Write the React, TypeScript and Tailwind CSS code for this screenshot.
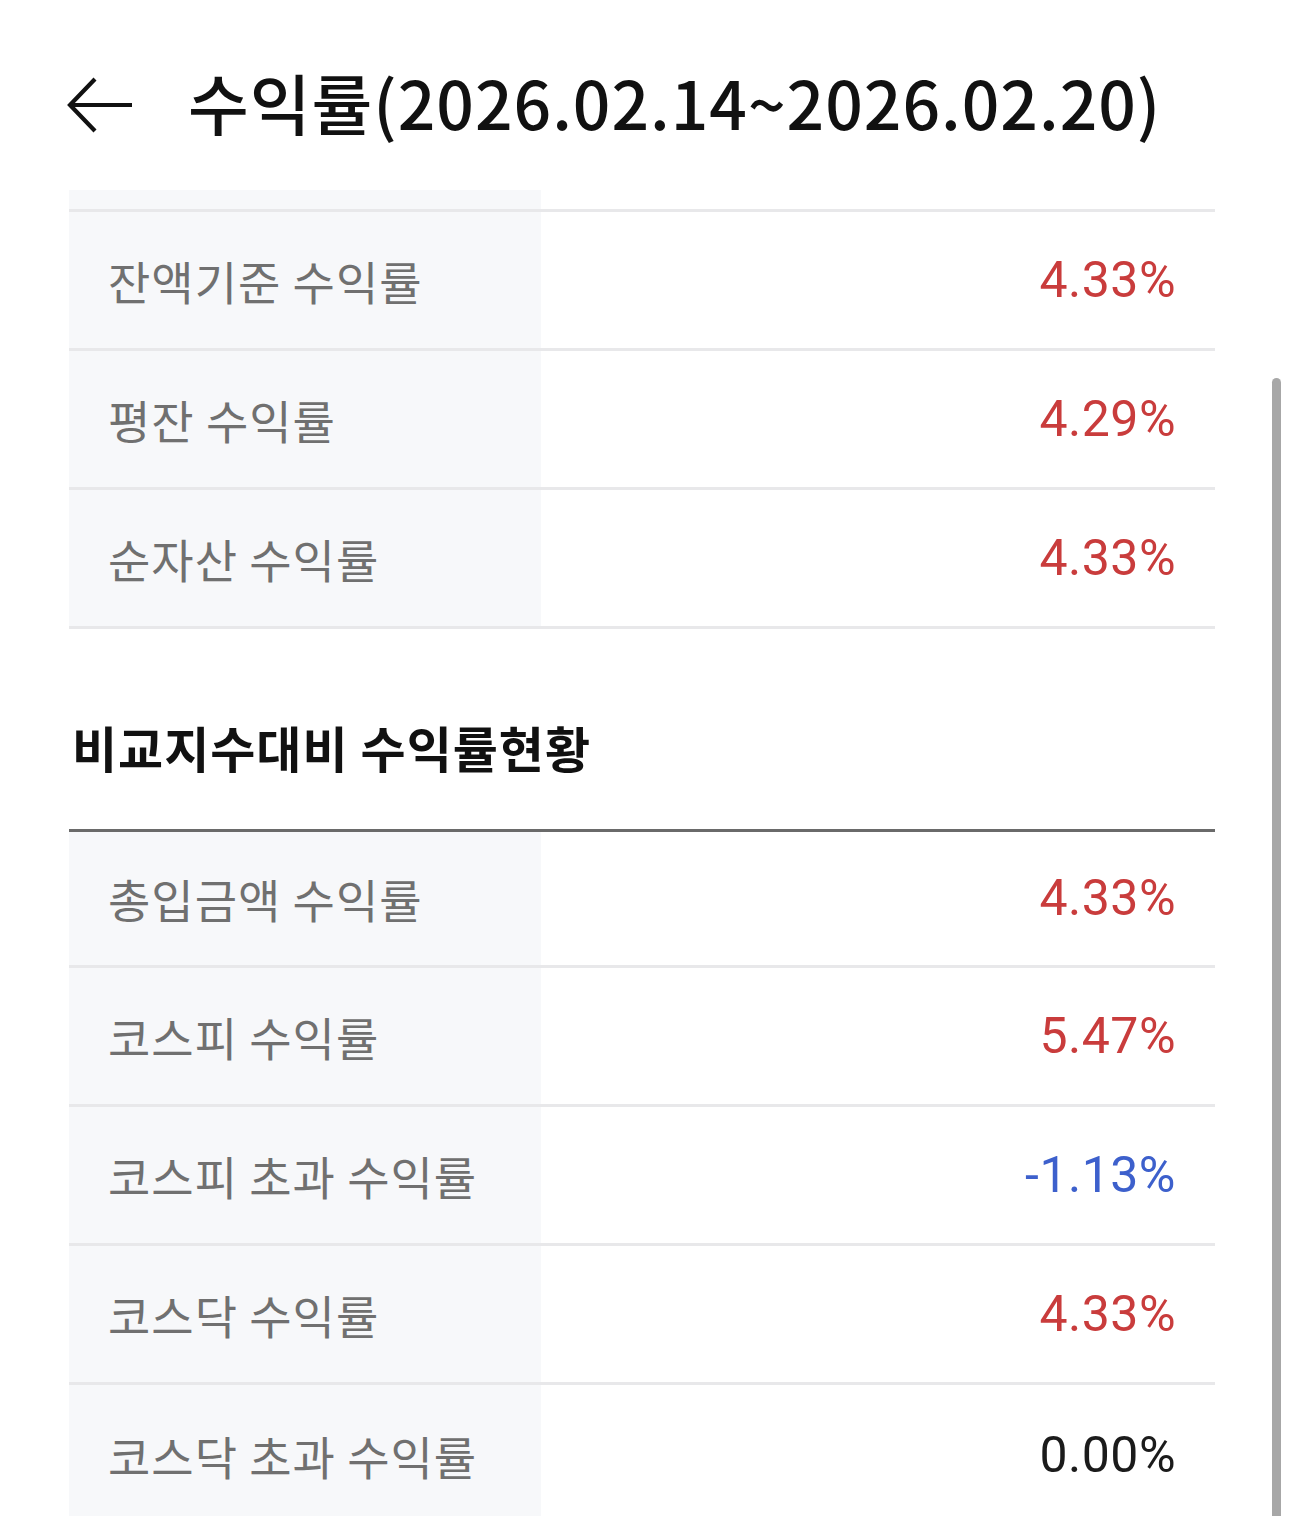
import React from "react";

type Row = { label: string; value: string; tone: "red" | "blue" | "black" };

const top: Row[] = [
  { label: "잔액기준 수익률", value: "4.33%", tone: "red" },
  { label: "평잔 수익률", value: "4.29%", tone: "red" },
  { label: "순자산 수익률", value: "4.33%", tone: "red" },
];

const bottom: Row[] = [
  { label: "총입금액 수익률", value: "4.33%", tone: "red" },
  { label: "코스피 수익률", value: "5.47%", tone: "red" },
  { label: "코스피 초과 수익률", value: "-1.13%", tone: "blue" },
  { label: "코스닥 수익률", value: "4.33%", tone: "red" },
  { label: "코스닥 초과 수익률", value: "0.00%", tone: "black" },
];

const toneClass = {
  red: "text-[#c93c3c]",
  blue: "text-[#3d60cc]",
  black: "text-[#1b1b1b]",
};

function TableRow({ row, first, h }: { row: Row; first?: boolean; h: string }) {
  return (
    <div className={`flex ${first ? "" : "border-t-[3px] border-[#e8e8ea]"}`}>
      <div
        className={`w-[472px] ${h} bg-[#f7f8fa] flex items-center pl-[39px] text-[46px] text-[#707070] tracking-[1px]`}
        style={{ fontFamily: '"Noto Sans CJK KR", "Noto Sans", sans-serif' }}
      >
        {row.label}
      </div>
      <div
        className={`flex-1 ${h} flex items-center justify-end pr-[39px] text-[50px] tracking-[0.5px] ${toneClass[row.tone]}`}
        style={{ fontFamily: 'Roboto, "Noto Sans", sans-serif' }}
      >
        {row.value}
      </div>
    </div>
  );
}

export default function App() {
  return (
    <div className="relative w-[1290px] h-[1516px] overflow-hidden bg-white">
      {/* Header */}
      <div className="h-[190px] flex items-center pl-[64px] pt-[12px]">
        <svg width="72" height="60" viewBox="0 0 72 60" className="shrink-0 mt-[8px]">
          <path
            d="M6 30 H68 M31 4 L6 30 L31 56"
            fill="none"
            stroke="#111"
            strokeWidth="4.2"
            strokeLinecap="butt"
            strokeLinejoin="miter"
          />
        </svg>
        <div
          className="ml-[52px] text-[66px] text-[#111] font-medium tracking-[1px] leading-none"
          style={{ fontFamily: '"Noto Sans CJK KR", "Noto Sans", sans-serif' }}
        >
          수익률(2026.02.14~2026.02.20)
        </div>
      </div>

      <div className="mx-[69px] w-[1146px]">
        {/* Table 1 */}
        <div className="flex">
          <div className="w-[472px] h-[19px] bg-[#f7f8fa]" />
        </div>
        <div className="border-t-[3px] border-[#e8e8ea]">
          {top.map((r, i) => (
            <TableRow key={r.label} row={r} first={i === 0} h="h-[136px]" />
          ))}
        </div>
        <div className="border-t-[3px] border-[#e8e8ea]" />

        {/* Section heading */}
        <div
          className="h-[200px] flex items-center pl-[3px] pt-[36px] text-[49px] font-bold text-[#111] tracking-[1px]"
          style={{ fontFamily: '"Noto Sans CJK KR", "Noto Sans", sans-serif' }}
        >
          비교지수대비 수익률현황
        </div>

        {/* Table 2 */}
        <div className="border-t-[3px] border-[#6a6a6a]">
          {bottom.map((r, i) => (
            <TableRow
              key={r.label}
              row={r}
              first={i === 0}
              h={i === 0 ? "h-[133px]" : i === bottom.length - 1 ? "h-[140px]" : "h-[136px]"}
            />
          ))}
        </div>
      </div>

      {/* Scrollbar */}
      <div className="absolute left-[1272px] top-[378px] w-[9px] h-[1200px] rounded-t-full bg-[#a7a7a7]" />
    </div>
  );
}
